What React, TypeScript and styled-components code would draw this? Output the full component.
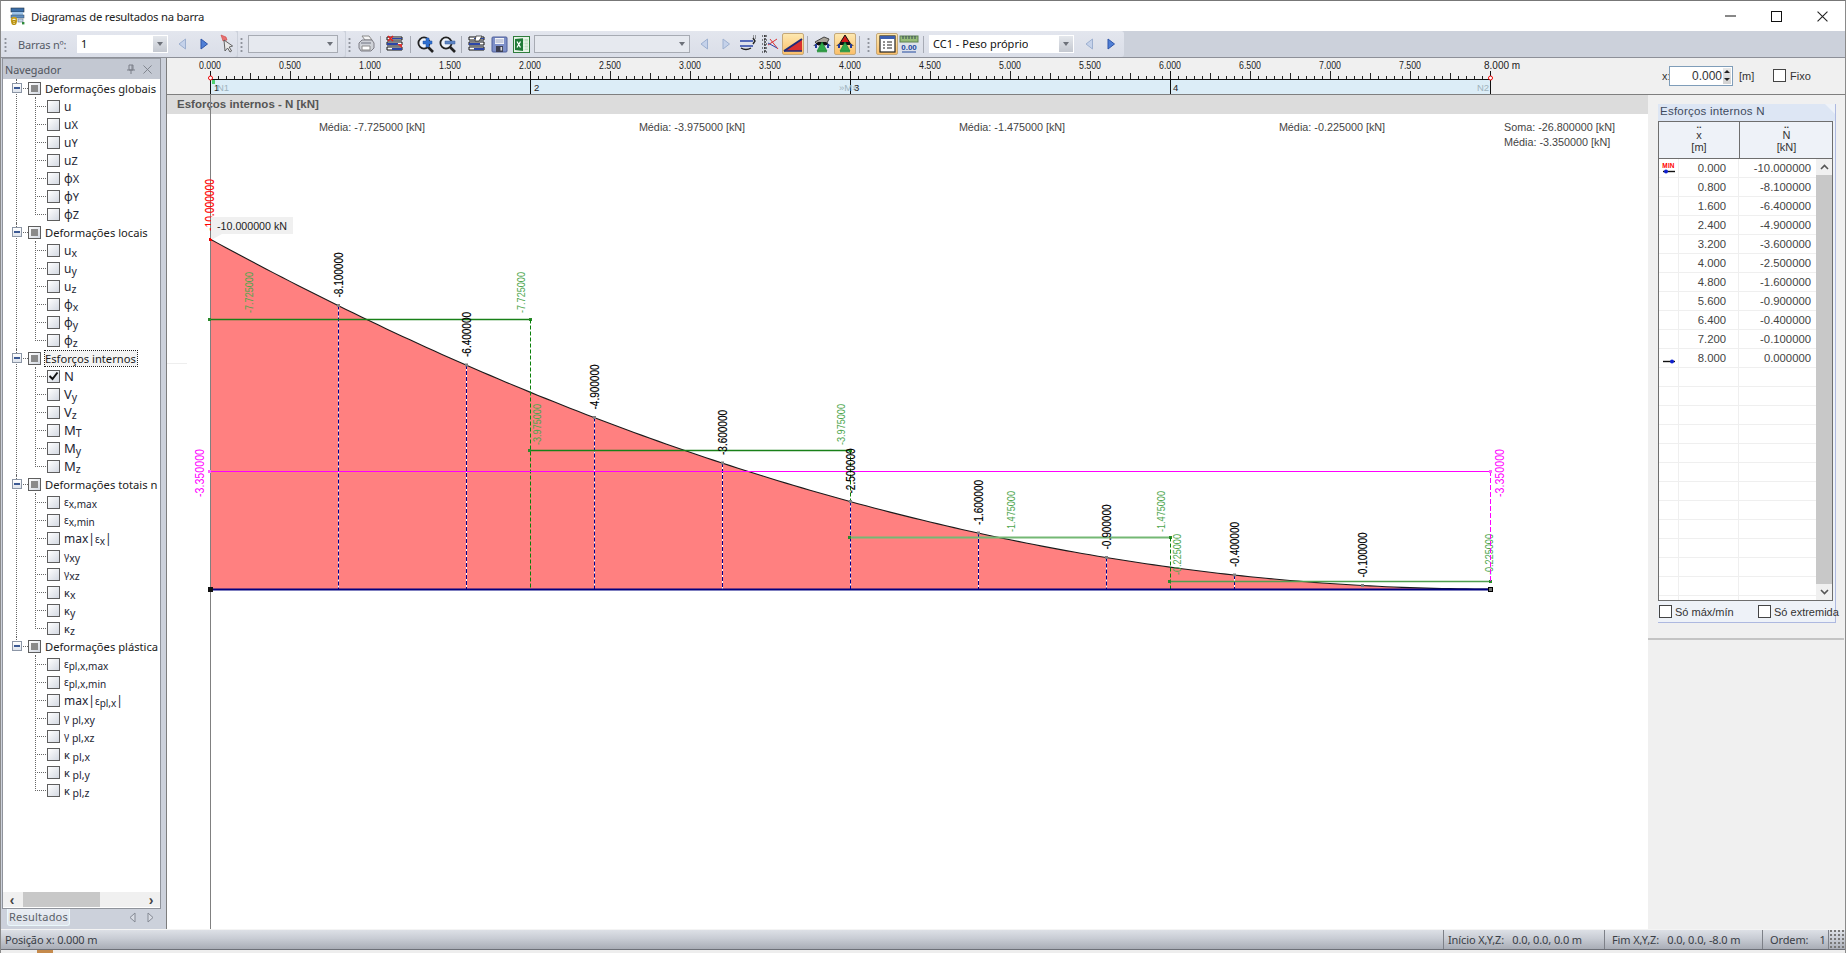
import React from 'react';
import styled, { createGlobalStyle } from 'styled-components';

const Global = createGlobalStyle`
  html, body { margin: 0; padding: 0; width: 1846px; height: 953px; overflow: hidden; background: #fff; }
  #root { width: 1846px; height: 953px; }
  * { box-sizing: border-box; }
`;

const UI = '"Noto Sans", "Open Sans", sans-serif';
const DATA = '"Liberation Sans", Arial, sans-serif';

const Window = styled.div`
  width: 1846px; height: 953px; display: flex; flex-direction: column; overflow: hidden;
  border-top: 1px solid #777; border-left: 1px solid #8a8a8a; border-right: 1px solid #8a8a8a;
  background: #fff; font-family: ${UI}; color: #333;
`;
const TitleBar = styled.div`
  height: 30px; flex: none; display: flex; align-items: center; padding-left: 8px; background: #fff;
`;
const TitleText = styled.span`
  margin-left: 6px; font-size: 11.3px; letter-spacing: -.02em; color: #222; flex: 1;
`;
const WinButton = styled.button`
  width: 46px; height: 30px; border: 0; background: transparent; display: flex; align-items: center; justify-content: center; padding: 0;
`;
const ToolbarRow = styled.div`
  height: 27px; flex: none; display: flex; background: #ccd1db; border-bottom: 1px solid #8d9098;
`;
const Band = styled.div<{ $w: number }>`
  width: ${p => p.$w}px; height: 26px; display: flex; align-items: center;
  background: linear-gradient(#e3e6ee, #dadee8); border-radius: 0 3px 3px 0; margin-right: 1px;
`;
const Grip = styled.span<{ $ml?: number; $mr?: number }>`
  width: 3px; height: 15px; flex: none; margin-left: ${p => p.$ml ?? 3}px; margin-right: ${p => p.$mr ?? 3}px;
  background-image: radial-gradient(circle, #8f939c 1px, transparent 1.2px);
  background-size: 3px 4px;
`;
const ToolLabel = styled.span`
  font-size: 11px; color: #555b66; margin: 0 10px 0 8px; white-space: nowrap; width: 50px; letter-spacing: -.02em;
`;
const Combo = styled.div<{ $w: number; $white?: boolean; $ml?: number }>`
  width: ${p => p.$w}px; height: 18px; flex: none; margin-left: ${p => p.$ml ?? 0}px;
  display: flex; align-items: stretch; justify-content: space-between;
  background: ${p => (p.$white ? '#fff' : '#e6e9ef')};
  border: 1px solid ${p => (p.$white ? '#fff' : '#a7abb3')};
  font-size: 11px; color: #111;
`;
const ComboValue = styled.span`
  padding-left: 3px; line-height: 15px; white-space: nowrap; overflow: hidden;
`;
const ComboArrow = styled.span<{ $white?: boolean }>`
  width: 14px; display: flex; align-items: center; justify-content: center;
  background: ${p => (p.$white ? 'linear-gradient(#e4e7ec,#c4c8d0)' : 'transparent')};
  &::before { content: ''; border: 3.5px solid transparent; border-top: 4px solid #6d7179; border-bottom: 0; }
`;
const ToolButton = styled.span<{ $active?: boolean; $ml?: number }>`
  width: 22px; height: 22px; flex: none; display: flex; align-items: center; justify-content: center;
  margin-left: ${p => p.$ml ?? 0}px; border-radius: 2px;
  ${p => p.$active ? 'background: linear-gradient(#fde8b0,#fbbf6a); border: 1px solid #c5a878;' : ''}
`;
const ToolSep = styled.span<{ $w: number }>`
  width: ${p => p.$w}px; height: 17px; flex: none; display: flex; justify-content: center;
  &::before { content: ''; width: 1px; background: #a7abb5; }
`;

const Main = styled.div`
  height: 871px; flex: none; display: flex; background: #ccd1db;
`;
const Dock = styled.div`
  width: 165px; flex: none; display: flex; flex-direction: column; padding-left: 1px;
`;
const NavPanel = styled.div`
  width: 159px; height: 851px; display: flex; flex-direction: column; background: #fff;
  border: 1px solid #8f939b; border-top: 0;
`;
const NavHeader = styled.div`
  height: 21px; flex: none; display: flex; align-items: center; background: #c3c8d2; padding: 0 4px 0 2px;
  font-size: 10.8px; color: #50545c; border-top: 1px solid #9a9ea6;
`;
const NavTitle = styled.span`flex: 1;`;
const NavTool = styled.span`width: 17px; display: flex; justify-content: center;`;
const Tree = styled.div`
  flex: 1; min-height: 0; overflow: hidden; white-space: nowrap; font-size: 11.2px; color: #1a1a1a;
`;
const Group = styled.div<{ $last?: boolean }>`
  margin-left: 13px;
  border-left: 1px dotted ${p => (p.$last ? 'transparent' : '#666')};
`;
const GroupRow = styled.div<{ $last?: boolean }>`
  height: 18px; position: relative; display: flex; align-items: center; gap: 4px; padding-left: 11px;
  &::before { content: ''; position: absolute; left: 4px; width: 7px; top: 9px; border-top: 1px dotted #666; }
  ${p => p.$last ? '&::after { content: ""; position: absolute; left: -1px; top: 0; height: 9px; border-left: 1px dotted #666; }' : ''}
`;
const Expand = styled.span`
  position: absolute; left: -5px; top: 4px; width: 10px; height: 10px; z-index: 1;
  background: linear-gradient(#fff, #dfe4ec); border: 1px solid #8c96a6;
  &::before { content: ''; position: absolute; left: 1px; right: 1px; top: 3px; height: 2px; background: #3c5a94; }
`;
const Check = styled.span<{ $on?: boolean; $mixed?: boolean }>`
  width: 13px; height: 13px; flex: none; position: relative; border: 1px solid #5e5e5e;
  background: linear-gradient(135deg, #fff, #d4d9e2);
  display: inline-flex; align-items: center; justify-content: center;
  ${p => p.$mixed ? '&::before { content: ""; width: 7px; height: 7px; background: #8a8a8a; }' : ''}
`;
const GroupLabel = styled.span<{ $focus?: boolean }>`
  ${p => p.$focus ? 'outline: 1px dotted #222; background: #f3f3f3;' : ''}
  line-height: 15px; padding-right: 1px;
`;
const ChildList = styled.div`
  margin-left: 18px; border-left: 1px dotted #666;
`;
const ChildRow = styled.div`
  height: 18px; position: relative; display: flex; align-items: center; gap: 4px; padding-left: 11px;
  &::before { content: ''; position: absolute; left: 1px; width: 9px; top: 9px; border-top: 1px dotted #666; }
  &:last-child::after { content: ''; position: absolute; left: -1px; top: 10px; bottom: 0; width: 1px; background: #fff; }
`;
const ItemLabel = styled.span`
  display: inline-flex; align-items: baseline; font-size: 12px; color: #1d2533; white-space: pre;
`;
const Small = styled.span<{ $s?: number; $low?: boolean }>`
  font-size: ${p => p.$s ?? 11}px; ${p => p.$low ? 'position: relative; top: 2px;' : ''}
`;
const HScroll = styled.div`
  height: 15px; flex: none; margin-bottom: 1px; background: #f0f0f0; display: flex; align-items: center; padding: 0 3px;
`;
const HThumb = styled.span`
  width: 77px; height: 15px; background: #c8c8c8; margin: 0 auto 0 5px;
`;
const ScrollGlyph = styled.span`
  font-size: 14px; line-height: 14px; font-weight: 700; color: #444; width: 12px; font-family: ${DATA}; text-align: center;
`;
const TabRow = styled.div`
  height: 20px; flex: none; display: flex; align-items: center; padding: 0 8px 3px 5px;
`;
const Tab = styled.span`
  width: 63px; height: 17px; font-size: 11px; line-height: 16px; text-align: center; color: #5a5f68;
  background: linear-gradient(#e9edf3, #dde2ea); border: 1px solid #eaf8fb; border-top: 0; border-radius: 0 0 3px 3px;
  letter-spacing: .02em;
`;
const TabArrows = styled.span`
  margin-left: auto; display: flex; gap: 9px; margin-right: 3px;
`;

const Work = styled.div`
  flex: 1; min-width: 0; display: flex; flex-direction: column; background: #f0f0f0; border-left: 1px solid #7d7d7d;
`;
const RulerRow = styled.div`
  height: 37px; flex: none; display: flex; background: #f0f0f0; border-bottom: 1px solid #7f7f7f;
`;
const RulerSvg = styled.svg`
  width: 1490px; height: 36px; flex: none; display: block;
`;
const RulerLabel = styled.text`
  font: 10px ${DATA}; fill: #222;
`;
const StripLabel = styled.text<{ $faint?: boolean }>`
  font: 9.5px ${DATA}; fill: ${p => (p.$faint ? '#9fb3bd' : '#222')};
`;
const XControls = styled.div`
  flex: 1; display: flex; align-items: center; font: 11px ${DATA}; color: #333; padding: 0 0 1px 5px;
`;
const XLabel = styled.span<{ $w: number }>`
  width: ${p => p.$w}px; flex: none; white-space: nowrap;
`;
const XInput = styled.div`
  width: 64px; height: 20px; flex: none; border: 1px solid #7f9db9; background: #fff; display: flex; align-items: center; justify-content: flex-end;
  margin-right: 6px; font-size: 12px;
`;
const Spin = styled.span`
  width: 8px; height: 16px; margin: 0 1px 0 1px; background: linear-gradient(#e8e8e8, #d2d2d2); display: flex; flex-direction: column; align-items: center; justify-content: space-around;
  &::before { content: ''; border: 3px solid transparent; border-bottom: 3px solid #222; border-top: 0; }
  &::after { content: ''; border: 3px solid transparent; border-top: 3px solid #222; border-bottom: 0; }
`;
const PlainBox = styled.span`
  width: 13px; height: 13px; flex: none; border: 1px solid #444; background: #fff; display: inline-block;
`;
const FixoBox = styled(PlainBox)`
  margin-right: 4px;
`;
const Content = styled.div`
  flex: 1; min-height: 0; display: flex;
`;
const ChartColumn = styled.div`
  width: 1481px; flex: none; display: flex; flex-direction: column; background: #fff;
`;
const ChartTitle = styled.div`
  height: 19px; flex: none; position: relative; background: #dcdcdc; font: 700 11.5px ${DATA}; color: #555;
  line-height: 18px; padding-left: 10px;
  &::before { content: ''; position: absolute; left: 43px; top: 0; bottom: 0; width: 1px; background: #808080; }
`;
const ChartSvg = styled.svg`
  width: 1481px; height: 815px; display: block; flex: none;
`;
const InfoText = styled.text`font: 10.8px ${DATA}; fill: #444;`;
const ValueText = styled.text<{ $c: string; $s: number; $w: number }>`
  font-family: ${DATA}; font-size: ${p => p.$s}px; fill: ${p => p.$c}; stroke: ${p => p.$c}; stroke-width: ${p => p.$w}px;
`;
const Tooltip = styled.text`font: 11.5px ${DATA}; fill: #222;`;

const Results = styled.div`
  flex: 1; min-width: 0; display: flex; flex-direction: column; padding: 9px 0 0 10px;
`;
const ResultsBox = styled.div`
  width: 178px; height: 519px; flex: none; display: flex; flex-direction: column; background: #eef2f8;
  border-right: 1px solid #aeb9e0; border-bottom: 1px solid #aeb9e0;
`;
const ResultsTab = styled.div`
  height: 17px; flex: none; background: #dde6f4; font: 11.5px ${DATA}; color: #3d4a5e; padding: 1px 0 0 2px; letter-spacing: .02em;
  clip-path: polygon(0 0, calc(100% - 10px) 0, 100% 10px, 100% 100%, 0 100%);
`;
const Table = styled.div`
  width: 175px; height: 480px; flex: none; background: #fff; border: 1px solid #6e6e6e; overflow: hidden; font: 11px ${DATA}; color: #444; position: relative;
`;
const TableHead = styled.div`
  height: 37px; display: flex; background: #eef2f8; border-bottom: 1px solid #6e6e6e;
`;
const HeadCell = styled.div<{ $w: number }>`
  width: ${p => p.$w}px; flex: none; display: flex; flex-direction: column; align-items: center; line-height: 12px; color: #333;
  & + & { border-left: 1px solid #6e6e6e; }
`;
const HeadDots = styled.span`height: 7px; font-size: 9px; line-height: 7px; font-weight: 700;`;
const Row = styled.div`
  height: 19px; width: 158px; display: grid; grid-template-columns: 20px 60px 78px; align-items: center;
  border-bottom: 1px solid #efefef;
`;
const Cell = styled.span<{ $pr: number }>`
  text-align: right; padding-right: ${p => p.$pr}px; height: 18px; line-height: 19px;
  border-right: 1px solid #efefef; font-size: 11.3px;
`;
const MarkCell = styled.span`
  height: 18px; position: relative; display: flex; flex-direction: column; align-items: center; border-right: 1px solid #efefef; justify-content: flex-end; padding-bottom: 3px;
`;
const MinTag = styled.span`
  font: 700 6.5px ${DATA}; color: #f00; line-height: 7px; letter-spacing: .02em;
`;
const VScroll = styled.div`
  position: absolute; right: 0; top: 37px; bottom: 0; width: 16px; background: #c8c8c8; display: flex; flex-direction: column; justify-content: space-between;
`;
const VEnd = styled.span`
  height: 16px; background: #f0f0f0; display: flex; align-items: center; justify-content: center;
`;
const ResultsFoot = styled.div`
  flex: 1; display: flex; align-items: center; font: 11px ${DATA}; color: #333;
`;
const FootCheck = styled.span<{ $w: number }>`
  width: ${p => p.$w}px; flex: none; display: flex; align-items: center; gap: 3px; padding-left: 1px; white-space: nowrap;
`;
const Rule = styled.div`
  height: 2px; width: 196px; margin: 15px 0 0 -10px; background: #c4c4c4; flex: none;
`;
const StatusBar = styled.div`
  height: 21px; flex: none; display: flex; align-items: stretch; font-size: 11px; color: #3a3e46;
  background: linear-gradient(#dde0e6, #c8ccd4 45%, #a9adb6); border-top: 1px solid #f4f4f4; border-bottom: 1px solid #6d7078;
`;
const StatusMain = styled.span`flex: 1; padding: 2px 0 0 4px; letter-spacing: -.015em;`;
const StatusPane = styled.span<{ $w: number; $gap: number }>`
  width: ${p => p.$w}px; flex: none; border-left: 1px solid #7d8088; padding: 2px 0 0 ${p => p.$gap}px; white-space: pre; letter-spacing: -.01em;
`;
const StatusGrip = styled.span`
  width: 17px; flex: none; border-left: 1px solid #7d8088;
  background-image: radial-gradient(circle, #777 .8px, transparent 1px);
  background-size: 4px 4px; background-position: right bottom;
`;
const BottomStrip = styled.div`
  height: 3px; flex: none; background: #eee; display: flex;
  &::before { content: ''; width: 16px; margin-left: 36px; background: #c58a4c; }
`;

/* ---------- Drawn icons ---------- */
const TitleIcon = () => (
  <svg width="16" height="18" viewBox="0 0 16 18">
    <rect x="2" y="1" width="13" height="4" fill="#3b6ea8" stroke="#234" strokeWidth=".6" />
    <rect x="3" y="5" width="11" height="3" fill="#9fc4e8" />
    <rect x="2" y="8" width="13" height="3" fill="#5f8fc4" stroke="#345" strokeWidth=".5" />
    <circle cx="5" cy="13" r="2.4" fill="none" stroke="#caa018" strokeWidth="1.6" />
    <circle cx="5" cy="15.4" r="2" fill="none" stroke="#b58f10" strokeWidth="1.4" />
    <rect x="9" y="12" width="5" height="3" fill="#c9d7e8" stroke="#567" strokeWidth=".5" />
    <rect x="13" y="15" width="2.4" height="2.4" fill="#2e8b3a" />
  </svg>
);
const Tri = ({ dir, on }: { dir: 'l' | 'r'; on?: boolean }) => (
  <svg width="12" height="14" viewBox="0 0 12 14">
    <path d={dir === 'l' ? 'M9.5 2 3 7l6.5 5z' : 'M3 2l6.5 5L3 12z'} fill={on ? '#4f7fd6' : '#c5d2ea'} stroke={on ? '#2f55a8' : '#9db0d0'} />
  </svg>
);
const Pick = () => (
  <svg width="16" height="20" viewBox="0 0 16 20">
    <path d="M3 1l5 2 1 3-4 1z" fill="#e87070" stroke="#c44" strokeWidth=".6" />
    <path d="M6 6l1 11 2.6-3 2.4 4 1.6-1-2.4-4 3.4-1z" fill="#e8e8e8" stroke="#555" strokeWidth=".9" />
  </svg>
);
const Printer = () => (
  <svg width="18" height="18" viewBox="0 0 18 18">
    <path d="M5 1h7l3 4H8z" fill="#f6f6f6" stroke="#8a8a8a" />
    <path d="M2 8l3-3h10l2 3v5l-3 3H4l-2-3z" fill="#cfd2d8" stroke="#7d7d85" />
    <path d="M5 11h8v4H5z" fill="#fff" stroke="#8a8a8a" />
    <path d="M4 8h10" stroke="#6f7380" />
  </svg>
);
const Stripes = ({ mark }: { mark?: boolean }) => (
  <svg width="18" height="18" viewBox="0 0 18 18">
    <path d="M1 2h15v3H1zM1 7h15v3H1zM1 12h15v3H1z" fill="#fff" stroke="#111" />
    <path d="M6 3h10v1H6zM1 8h11v2H1zM6 13h10v2H6z" fill="#2b45a8" />
    {mark && <path d="M2 1l5 5M7 1L2 6" stroke="#d22" strokeWidth="1.6" />}
    {!mark && <path d="M8 1h6l-3 5H7z" fill="#fff" stroke="#333" strokeWidth=".8" />}
    {mark && <path d="M11 9l5 4v-4z" fill="#d33" />}
  </svg>
);
const Lens = ({ minus }: { minus?: boolean }) => (
  <svg width="19" height="19" viewBox="0 0 19 19">
    <circle cx="8" cy="8" r="5.6" fill="#eef3fb" stroke="#222" strokeWidth="1.8" />
    <path d="M12 12l5 5" stroke="#222" strokeWidth="2.6" />
    {minus
      ? <path d="M7 6h10v3H7z" fill="#5e85c4" stroke="#3a5f9e" strokeWidth=".5" />
      : <path d="M10 3h3v3h3v3h-3v3h-3V9H7V6h3z" fill="#2e6fd0" stroke="#2350a0" strokeWidth=".5" />}
  </svg>
);
const Save = () => (
  <svg width="17" height="17" viewBox="0 0 17 17">
    <rect x="1" y="1" width="15" height="15" rx="1" fill="#7d8fc8" stroke="#4f5f9a" />
    <rect x="4" y="2" width="9" height="6" fill="#f3f4f8" />
    <path d="M4.5 4h8M4.5 6h8" stroke="#9aa4c4" />
    <rect x="5" y="10" width="7" height="6" fill="#3d3f52" />
    <rect x="9.5" y="11" width="1.6" height="3.5" fill="#ddd" />
  </svg>
);
const Excel = () => (
  <svg width="17" height="17" viewBox="0 0 17 17">
    <rect x=".5" y=".5" width="16" height="16" fill="#e7f3e7" stroke="#2f7d3c" />
    <rect x="8" y="3" width="7" height="11" fill="#bfe0c2" />
    <path d="M8 6h7M8 9h7M8 12h7M11 3v11" stroke="#fff" strokeWidth=".7" />
    <path d="M2 3l8-.8v12.8l-8-1z" fill="#1f7a36" />
    <path d="M4 5.5l3.5 6M7.5 5.5l-3.5 6" stroke="#fff" strokeWidth="1.3" />
  </svg>
);
const Beam = () => (
  <svg width="18" height="18" viewBox="0 0 18 18">
    <path d="M1 6h13M1 11h13" stroke="#2b45a8" strokeWidth="1.5" />
    <path d="M14 3l2 3-2 3M2 13q5 3 10 0" stroke="#222" fill="none" strokeWidth="1.4" />
    <path d="M14 1h3M14 3h3" stroke="#444" strokeDasharray="1 1" />
  </svg>
);
const Cross = () => (
  <svg width="20" height="20" viewBox="0 0 20 20">
    <path d="M4 1v18" stroke="#111" strokeDasharray="2 1" strokeWidth="1.2" />
    <path d="M1 2h5M1 6h5M1 10h5M1 14h5M1 18h5" stroke="#111" strokeDasharray="1 1" />
    <path d="M7 11l9-6M9 5l8 10" stroke="#d33" />
    <path d="M7 9l9 5" stroke="#2b45a8" />
  </svg>
);
const Ramp = () => (
  <svg width="20" height="18" viewBox="0 0 20 18">
    <path d="M1 16L19 4v12z" fill="#d83030" />
    <path d="M1 16L19 4" stroke="#1c2a78" strokeWidth="2" />
    <path d="M1 16h18" stroke="#1c2a78" strokeWidth="1.5" />
  </svg>
);
const House = ({ dark }: { dark?: boolean }) => (
  <svg width="20" height="20" viewBox="0 0 20 20">
    {dark
      ? <path d="M10 1l5 8H5z" fill="#d01818" stroke="#111" />
      : <path d="M3 8l9-5 5 2-3 6H6z" fill="#a9a49a" stroke="#444" />}
    <path d="M1 12l5-4h8l5 4-4-1H5z" fill="#111" />
    <path d="M4 10v4M16 10v4" stroke="#223a9a" strokeWidth="2" />
    <path d="M10 8l5 9H5z" fill="#2faa4a" stroke="#137a30" strokeWidth=".6" />
    <path d="M5 17.5h10" stroke="#3c9c4c" strokeWidth="1.6" />
  </svg>
);
const ListIcon = () => (
  <svg width="17" height="18" viewBox="0 0 17 18">
    <rect x="1" y="1" width="15" height="16" fill="#fff" stroke="#222" strokeWidth="1.2" />
    <rect x="1" y="1" width="15" height="3" fill="#3d5fae" />
    <path d="M4 7h2M8 7h5M4 10h2M8 10h5M4 13h2M8 13h5" stroke="#222" strokeWidth="1.2" />
  </svg>
);
const RulerIcon = () => (
  <svg width="20" height="20" viewBox="0 0 20 20">
    <rect x="1" y="2" width="18" height="6" fill="#97bd78" stroke="#5c8050" />
    <path d="M4 2v3M7 2v3M10 2v3M13 2v3M16 2v3" stroke="#345" />
    <text x="10" y="16" textAnchor="middle" fontFamily={DATA} fontSize="8" fontWeight="700" fill="#234a9e">0.00</text>
    <path d="M3 18h14" stroke="#234a9e" />
  </svg>
);
const Pin = () => (
  <svg width="10" height="11" viewBox="0 0 10 11"><path d="M3 1h4v5H3zM1 6h8M5 6v4M6 1v5" stroke="#7b7f88" fill="none" /></svg>
);
const CloseX = ({ c = '#7b7f88', s = 9 }: { c?: string; s?: number }) => (
  <svg width={s} height={s} viewBox="0 0 10 10"><path d="M.5.5l9 9M9.5.5l-9 9" stroke={c} strokeWidth="1" /></svg>
);
const OutlineTri = ({ dir }: { dir: 'l' | 'r' }) => (
  <svg width="9" height="11" viewBox="0 0 9 11"><path d={dir === 'l' ? 'M7 1L2 5.5 7 10z' : 'M2 1l5 4.5L2 10z'} fill="#d8dce4" stroke="#858a94" /></svg>
);
const Chevron = ({ up }: { up?: boolean }) => (
  <svg width="9" height="6" viewBox="0 0 9 6"><path d={up ? 'M1 5l3.5-3.5L8 5' : 'M1 1l3.5 3.5L8 1'} fill="none" stroke="#555" strokeWidth="1.6" /></svg>
);
const Tick = () => (
  <svg width="11" height="10" viewBox="0 0 11 10"><path d="M1.5 5l3 3L9.5 1.5" fill="none" stroke="#111" strokeWidth="2" /></svg>
);
const MarkArrow = ({ dir }: { dir: 'l' | 'r' }) => (
  <svg width="14" height="5" viewBox="0 0 14 5">
    <path d="M1 2.5h12" stroke="#111" strokeWidth="1.4" />
    <circle cx={dir === 'l' ? 4 : 10} cy="2.5" r="2" fill="#1020d0" />
  </svg>
);

/* ---------- Tree data ---------- */
type Item = { k: string; node: React.ReactNode; on?: boolean };
const cap = (m: string, s: string, ms = 12) => <><Small $s={ms}>{m}</Small><Small $s={11}>{s}</Small></>;
const low = (m: string, s: string, ms = 12, ss = 10.5) => <><Small $s={ms}>{m}</Small><Small $s={ss} $low>{s}</Small></>;

const groups: { label: string; focus?: boolean; items: Item[] }[] = [
  { label: 'Deformações globais', items: [
    { k: 'u', node: 'u' },
    { k: 'uX', node: cap('u', 'X') }, { k: 'uY', node: cap('u', 'Y') }, { k: 'uZ', node: cap('u', 'Z') },
    { k: 'pX', node: cap('φ', 'X') }, { k: 'pY', node: cap('φ', 'Y') }, { k: 'pZ', node: cap('φ', 'Z') },
  ] },
  { label: 'Deformações locais', items: [
    { k: 'ux', node: low('u', 'x') }, { k: 'uy', node: low('u', 'y') }, { k: 'uz', node: low('u', 'z') },
    { k: 'px', node: low('φ', 'x') }, { k: 'py', node: low('φ', 'y') }, { k: 'pz', node: low('φ', 'z') },
  ] },
  { label: 'Esforços internos', focus: true, items: [
    { k: 'N', node: <Small $s={13}>N</Small>, on: true },
    { k: 'Vy', node: low('V', 'y', 13) }, { k: 'Vz', node: low('V', 'z', 13) },
    { k: 'MT', node: low('M', 'T', 13) }, { k: 'My', node: low('M', 'y', 13) }, { k: 'Mz', node: low('M', 'z', 13) },
  ] },
  { label: 'Deformações totais n', items: [
    { k: 'e1', node: low('ε', 'x,max', 10, 10) }, { k: 'e2', node: low('ε', 'x,min', 10, 10) },
    { k: 'e3', node: <>max|{low('ε', 'x', 10, 10)}|</> },
    { k: 'g1', node: low('γ', 'xy', 10, 10.5) }, { k: 'g2', node: low('γ', 'xz', 10, 10.5) },
    { k: 'k1', node: low('κ', 'x', 11) }, { k: 'k2', node: low('κ', 'y', 11) }, { k: 'k3', node: low('κ', 'z', 11) },
  ] },
  { label: 'Deformações plástica', items: [
    { k: 'p1', node: low('ε', 'pl,x,max', 10, 10) }, { k: 'p2', node: low('ε', 'pl,x,min', 10, 10) },
    { k: 'p3', node: <>max|{low('ε', 'pl,x', 10, 10)}|</> },
    { k: 'p4', node: low('γ', ' pl,xy', 10, 10.5) }, { k: 'p5', node: low('γ', ' pl,xz', 10, 10.5) },
    { k: 'p6', node: low('κ', ' pl,x', 11) }, { k: 'p7', node: low('κ', ' pl,y', 11) }, { k: 'p8', node: low('κ', ' pl,z', 11) },
  ] },
];

const NavTree = () => (
  <Tree>
    {groups.map((g, i) => {
      const last = i === groups.length - 1;
      return (
        <Group key={g.label} $last={last}>
          <GroupRow $last={last}>
            <Expand />
            <Check $mixed />
            <GroupLabel $focus={g.focus}>{g.label}</GroupLabel>
          </GroupRow>
          <ChildList>
            {g.items.map(it => (
              <ChildRow key={it.k}>
                <Check>{it.on && <Tick />}</Check>
                <ItemLabel>{it.node}</ItemLabel>
              </ChildRow>
            ))}
          </ChildList>
        </Group>
      );
    })}
  </Tree>
);

/* ---------- Ruler ---------- */
const X0 = 210;
const PX = 160;
const Y0 = 589;
const KN = 35;
const xAt = (m: number) => X0 + m * PX;
const yAt = (v: number) => Y0 - Math.abs(v) * KN;

const Ruler = () => {
  const ticks: React.ReactNode[] = [];
  for (let i = 0; i <= 160; i++) {
    const x = X0 + i * 8 + 0.5;
    const h = i % 10 === 0 ? 8 : i % 5 === 0 ? 6 : 3;
    ticks.push(<line key={i} x1={x} x2={x} y1={79 - h} y2={79} stroke="#222" />);
  }
  return (
    <RulerSvg viewBox="167 58 1490 36">
      <rect x={X0} y={79} width={1280} height={15} fill="#dcedf7" />
      <line x1={X0} x2={1491} y1={79.5} y2={79.5} stroke="#111" />
      {ticks}
      {Array.from({ length: 16 }, (_, i) => (
        <RulerLabel key={i} x={X0 + i * 80} y={69} textAnchor="middle" textLength={22} lengthAdjust="spacingAndGlyphs">
          {(i * 0.5).toFixed(3)}
        </RulerLabel>
      ))}
      <RulerLabel x={1484} y={69}>8.000 m</RulerLabel>
      {[0, 2, 4, 6, 8].map(m => <line key={m} x1={xAt(m) + .5} x2={xAt(m) + .5} y1={71} y2={94} stroke="#111" />)}
      <StripLabel x={214} y={91}>1</StripLabel>
      <StripLabel x={217} y={91} $faint>N1</StripLabel>
      <StripLabel x={534} y={91}>2</StripLabel>
      <StripLabel x={839} y={91} $faint>»M»</StripLabel>
      <StripLabel x={854} y={91}>3</StripLabel>
      <StripLabel x={1173} y={91}>4</StripLabel>
      <StripLabel x={1477} y={91} $faint>N2</StripLabel>
      <circle cx={X0 + .5} cy={78} r={2} fill="#fff" stroke="#e00" />
      <circle cx={1490.5} cy={78} r={2} fill="#fff" stroke="#e00" />
      <rect x={212} y={80} width={3} height={4} fill="#4fd070" />
    </RulerSvg>
  );
};

/* ---------- Chart ---------- */
const nAt = (m: number) => 10 * Math.pow(1 - m / 8, 2);
const samples = [0.8, 1.6, 2.4, 3.2, 4, 4.8, 5.6, 6.4, 7.2];
const means = [
  { a: 0, b: 2, v: 7.725, t: '-7.725000' },
  { a: 2, b: 4, v: 3.975, t: '-3.975000' },
  { a: 4, b: 6, v: 1.475, t: '-1.475000' },
  { a: 6, b: 8, v: 0.225, t: '-0.225000' },
];

const Rot = ({ x, y, t, c, s, len, w = 0 }: { x: number; y: number; t: string; c: string; s: number; len: number; w?: number }) => (
  <ValueText
    $c={c}
    $s={s}
    $w={w}
    x={x}
    y={y}
    transform={`rotate(-90 ${x} ${y})`}
    textLength={len}
    lengthAdjust="spacingAndGlyphs"
  >
    {t}
  </ValueText>
);

const Chart = () => {
  const pts: string[] = [];
  for (let i = 0; i <= 160; i++) {
    const m = i * 0.05;
    pts.push(`${xAt(m)},${(Y0 - nAt(m) * KN).toFixed(2)}`);
  }
  return (
    <ChartSvg viewBox="167 114 1481 815">
      <rect x={167} y={363} width={20} height={1} fill="#eee" />
      <polygon points={`${X0},${Y0} ${pts.join(' ')}`} fill="#ff8080" />
      {samples.slice(0, 8).map(m => (
        <g key={m}>
          <line x1={xAt(m) + .5} x2={xAt(m) + .5} y1={Y0 - nAt(m) * KN} y2={Y0} stroke="#fff" />
          <line x1={xAt(m) + .5} x2={xAt(m) + .5} y1={Y0 - nAt(m) * KN} y2={Y0} stroke="#00008c" strokeDasharray="4 2" />
        </g>
      ))}
      <polyline points={pts.join(' ')} fill="none" stroke="#1a1a1a" strokeWidth="1.1" />
      <line x1={210.5} x2={210.5} y1={114} y2={929} stroke="#808080" />

      {/* Average lines */}
      {means.map((g, i) => {
        const y = Math.round(yAt(g.v)) + .5;
        const pale = i >= 2;
        return (
          <g key={g.t}>
            <line x1={xAt(g.a)} x2={xAt(g.b)} y1={y} y2={y} stroke={i === 2 ? '#74b874' : pale ? '#4f9f4f' : '#188018'} strokeWidth={i === 2 ? 2 : 1.3} />
            <rect x={xAt(g.a) - 2} y={y - 1.5} width={3} height={3} fill="#2b8a2b" />
            <rect x={xAt(g.b) - 1} y={y - 1.5} width={3} height={3} fill="#2b8a2b" />
            {i < 3 && <line x1={xAt(g.b) + .5} x2={xAt(g.b) + .5} y1={y} y2={i === 1 ? yAt(2.5) : Y0} stroke="#0a800a" strokeDasharray="4 2" />}
          </g>
        );
      })}
      <Rot x={253} y={313} t="-7.725000" c="#4ea64e" s={10} len={41} />
      <Rot x={525} y={313} t="-7.725000" c="#4ea64e" s={10} len={41} />
      <Rot x={541} y={445} t="-3.975000" c="#4ea64e" s={10} len={41} />
      <Rot x={845} y={445} t="-3.975000" c="#4ea64e" s={10} len={41} />
      <Rot x={1015} y={532} t="-1.475000" c="#4ea64e" s={10} len={41} />
      <Rot x={1165} y={532} t="-1.475000" c="#4ea64e" s={10} len={41} />
      <Rot x={1181} y={575} t="-0.225000" c="#4ea64e" s={10} len={41} />
      <Rot x={1493} y={575} t="-0.225000" c="#4ea64e" s={10} len={41} />

      {/* Overall mean */}
      <line x1={209} x2={1490} y1={471.5} y2={471.5} stroke="#ff00ff" />
      <line x1={1490.5} x2={1490.5} y1={471} y2={582} stroke="#ff00ff" strokeDasharray="5 2" />
      <rect x={208} y={470} width={3} height={3} fill="#ff60ff" />
      <rect x={1489} y={470} width={3} height={3} fill="#ff60ff" />
      <Rot x={204} y={497} t="-3.350000" c="#ff00ff" s={12} len={48} />
      <Rot x={1504} y={497} t="-3.350000" c="#ff00ff" s={12} len={48} />

      {/* Base line */}
      <line x1={210} x2={1490} y1={589.5} y2={589.5} stroke="#000080" strokeWidth="2" />
      <rect x={208} y={587} width={5} height={5} fill="#111" />
      <rect x={1488.5} y={587.5} width={4} height={4} fill="#777" stroke="#000" />

      {/* Sample labels */}
      {samples.map(m => {
        const y = Y0 - nAt(m) * KN;
        return (
          <g key={m}>
            <rect x={xAt(m) - 1} y={y - 1.5} width={3} height={3} fill="#808080" />
            <Rot x={xAt(m) + 5} y={y - 8} t={`-${nAt(m).toFixed(6)}`} c="#000" s={12} len={45} w={0.15} />
          </g>
        );
      })}

      {/* Extreme value */}
      <rect x={209} y={238} width={3} height={3} fill="#e00" />
      <Rot x={214} y={231} t="-10.000000" c="#f00" s={12} len={52} w={0.15} />
      <path d="M211 217h82v17h-71l-9 5h-2z" fill="#f0f0f0" />
      <Tooltip x={217} y={230} textLength={70} lengthAdjust="spacingAndGlyphs">-10.000000 kN</Tooltip>

      {/* Means text */}
      {[370, 690, 1010, 1330].map((x, i) => (
        <InfoText key={x} x={x + 2} y={131} textAnchor="middle">{`Média: ${means[i].t} [kN]`}</InfoText>
      ))}
      <InfoText x={1504} y={131}>Soma: -26.800000 [kN]</InfoText>
      <InfoText x={1504} y={146}>Média: -3.350000 [kN]</InfoText>
    </ChartSvg>
  );
};

/* ---------- Results table ---------- */
const rows = [
  ['0.000', '-10.000000'], ['0.800', '-8.100000'], ['1.600', '-6.400000'], ['2.400', '-4.900000'],
  ['3.200', '-3.600000'], ['4.000', '-2.500000'], ['4.800', '-1.600000'], ['5.600', '-0.900000'],
  ['6.400', '-0.400000'], ['7.200', '-0.100000'], ['8.000', '0.000000'],
  ...Array.from({ length: 13 }, () => ['', '']),
];

const ResultsPanel = () => (
  <Results>
    <ResultsBox>
      <ResultsTab>Esforços internos N</ResultsTab>
      <Table>
        <TableHead>
          <HeadCell $w={80}><HeadDots>..</HeadDots><span>x</span><span>[m]</span></HeadCell>
          <HeadCell $w={94}><HeadDots>..</HeadDots><span>N</span><span>[kN]</span></HeadCell>
        </TableHead>
        {rows.map((r, i) => (
          <Row key={i}>
            <MarkCell>
              {i === 0 && <MinTag>MIN</MinTag>}
              {i === 0 && <MarkArrow dir="l" />}
              {i === 10 && <MarkArrow dir="r" />}
            </MarkCell>
            <Cell $pr={12}>{r[0]}</Cell>
            <Cell $pr={5}>{r[1]}</Cell>
          </Row>
        ))}
        <VScroll>
          <VEnd><Chevron up /></VEnd>
          <VEnd><Chevron /></VEnd>
        </VScroll>
      </Table>
      <ResultsFoot>
        <FootCheck $w={99}><PlainBox />Só máx/mín</FootCheck>
        <FootCheck $w={78}><PlainBox />Só extremida</FootCheck>
      </ResultsFoot>
    </ResultsBox>
    <Rule />
  </Results>
);

export default function App() {
  return (
    <Window>
      <Global />
      <TitleBar>
        <TitleIcon />
        <TitleText>Diagramas de resultados na barra</TitleText>
        <WinButton><svg width="11" height="2" viewBox="0 0 11 2"><path d="M0 1h11" stroke="#111" /></svg></WinButton>
        <WinButton><svg width="11" height="11" viewBox="0 0 11 11"><rect x=".5" y=".5" width="10" height="10" fill="none" stroke="#111" /></svg></WinButton>
        <WinButton><CloseX c="#222" s={11} /></WinButton>
      </TitleBar>
      <ToolbarRow>
        <Band $w={236}>
          <Grip />
          <ToolLabel>Barras nº:</ToolLabel>
          <Combo $w={91} $white><ComboValue>1</ComboValue><ComboArrow $white /></Combo>
          <ToolButton $ml={3}><Tri dir="l" /></ToolButton>
          <ToolButton><Tri dir="r" on /></ToolButton>
          <ToolButton><Pick /></ToolButton>
        </Band>
        <Band $w={107}>
          <Grip $ml={2} $mr={5} />
          <Combo $w={90}><ComboValue /><ComboArrow /></Combo>
        </Band>
        <Band $w={778}>
          <Grip $ml={2} $mr={4} />
          <ToolButton><Printer /></ToolButton>
          <ToolSep $w={7} />
          <ToolButton><Stripes mark /></ToolButton>
          <ToolSep $w={8} />
          <ToolButton><Lens /></ToolButton>
          <ToolButton><Lens minus /></ToolButton>
          <ToolSep $w={7} />
          <ToolButton $ml={1}><Stripes /></ToolButton>
          <ToolButton><Save /></ToolButton>
          <ToolButton><Excel /></ToolButton>
          <Combo $w={156} $ml={2}><ComboValue /><ComboArrow /></Combo>
          <ToolButton $ml={3}><Tri dir="l" /></ToolButton>
          <ToolButton><Tri dir="r" /></ToolButton>
          <ToolButton><Beam /></ToolButton>
          <ToolButton $ml={1}><Cross /></ToolButton>
          <ToolButton $active><Ramp /></ToolButton>
          <ToolSep $w={7} />
          <ToolButton><House /></ToolButton>
          <ToolButton $ml={1} $active><House dark /></ToolButton>
          <ToolSep $w={7} />
          <Grip $ml={4} $mr={6} />
          <ToolButton $active><ListIcon /></ToolButton>
          <ToolButton><RulerIcon /></ToolButton>
          <ToolSep $w={7} />
          <Combo $w={145} $white $ml={2}>
            <ComboValue>CC1 - Peso próprio</ComboValue>
            <ComboArrow $white />
          </Combo>
          <ToolButton $ml={4}><Tri dir="l" /></ToolButton>
          <ToolButton><Tri dir="r" on /></ToolButton>
        </Band>
      </ToolbarRow>
      <Main>
        <Dock>
          <NavPanel>
            <NavHeader>
              <NavTitle>Navegador</NavTitle>
              <NavTool><Pin /></NavTool>
              <NavTool><CloseX /></NavTool>
            </NavHeader>
            <NavTree />
            <HScroll>
              <ScrollGlyph>‹</ScrollGlyph>
              <HThumb />
              <ScrollGlyph>›</ScrollGlyph>
            </HScroll>
          </NavPanel>
          <TabRow>
            <Tab>Resultados</Tab>
            <TabArrows><OutlineTri dir="l" /><OutlineTri dir="r" /></TabArrows>
          </TabRow>
        </Dock>
        <Work>
          <RulerRow>
            <Ruler />
            <XControls>
              <XLabel $w={7}>x:</XLabel>
              <XInput>0.000<Spin /></XInput>
              <XLabel $w={34}>[m]</XLabel>
              <FixoBox />
              <span>Fixo</span>
            </XControls>
          </RulerRow>
          <Content>
            <ChartColumn>
              <ChartTitle>Esforços internos - N [kN]</ChartTitle>
              <Chart />
            </ChartColumn>
            <ResultsPanel />
          </Content>
        </Work>
      </Main>
      <StatusBar>
        <StatusMain>Posição x: 0.000 m</StatusMain>
        <StatusPane $w={161} $gap={4}>{'Início X,Y,Z:   0.0, 0.0, 0.0 m'}</StatusPane>
        <StatusPane $w={158} $gap={7}>{'Fim X,Y,Z:   0.0, 0.0, -8.0 m'}</StatusPane>
        <StatusPane $w={66} $gap={7}>{'Ordem:    1'}</StatusPane>
        <StatusGrip />
      </StatusBar>
      <BottomStrip />
    </Window>
  );
}
